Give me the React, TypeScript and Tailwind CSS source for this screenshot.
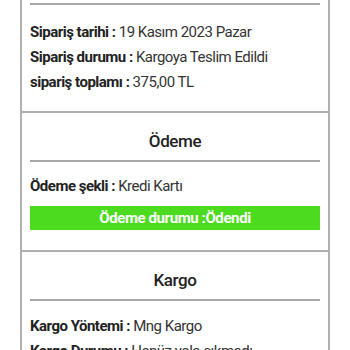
import React from "react";

const font = { fontFamily: "Roboto, 'Noto Sans', sans-serif" };

const Row: React.FC<{ label: string; value: string }> = ({ label, value }) => (
  <p className="text-[15px] leading-[25px] text-[#333] whitespace-nowrap tracking-[-0.5px]">
    <span className="font-bold text-[#222]">{label} : </span>
    {value}
  </p>
);

const Section: React.FC<{ title: string; children: React.ReactNode }> = ({
  title,
  children,
}) => (
  <div className="border-x-2 border-b-2 border-[#b0b0b0] px-[8px]">
    <h2 className="text-[17px] font-medium text-[#222] text-center pt-[18px] pb-[9px] leading-[20px] tracking-[-0.4px]">
      {title}
    </h2>
    <div className="h-[2px] bg-[#a8a8a8]" />
    {children}
  </div>
);

export default function App() {
  return (
    <div className="w-[350px] h-[350px] overflow-hidden bg-white px-[20px]" style={font}>
      <div className="border-x-2 border-b-2 border-[#b0b0b0] px-[8px] pt-[3px]">
        <div className="h-[2px] bg-[#a8a8a8]" />
        <div className="pt-[15px] pb-[16px]">
          <Row label="Sipariş tarihi" value="19 Kasım 2023 Pazar" />
          <Row label="Sipariş durumu" value="Kargoya Teslim Edildi" />
          <Row label="sipariş toplamı" value="375,00 TL" />
        </div>
      </div>
      <Section title="Ödeme">
        <div className="pt-[12px] pb-[20px]">
          <Row label="Ödeme şekli" value="Kredi Kartı" />
          <div className="mt-[7px] h-[24px] bg-[#4cdb1f] text-white font-bold text-[15px] leading-[24px] text-center tracking-[-0.4px]">
            Ödeme durumu :Ödendi
          </div>
        </div>
      </Section>
      <Section title="Kargo">
        <div className="pt-[13px]">
          <Row label="Kargo Yöntemi" value="Mng Kargo" />
          <Row label="Kargo Durumu" value="Henüz yola çıkmadı" />
        </div>
      </Section>
    </div>
  );
}
